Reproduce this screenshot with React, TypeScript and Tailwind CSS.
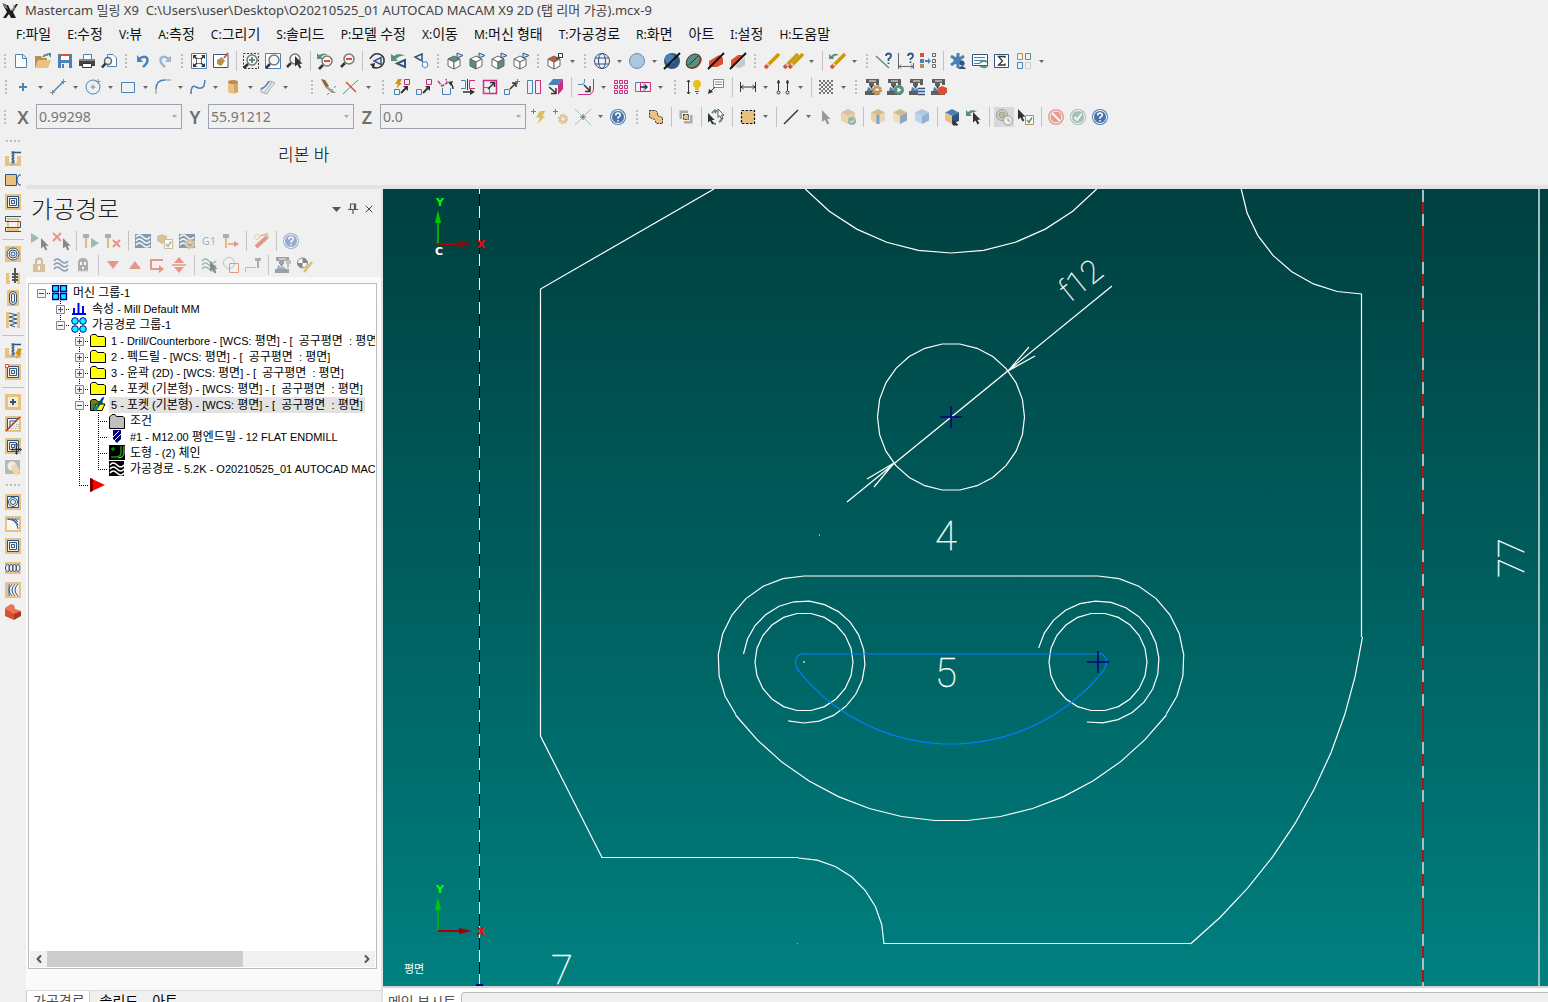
import React from 'react';
import { ChevronLeft, ChevronRight, X } from 'lucide-react';
import clsx from 'clsx';

const BLUE = '#4a82b8';
const NAVY = '#2f5580';
const GREEN = '#5a9080';
const RED = '#dc5032';
const TAN = '#e9c281';
const DARK = '#333333';
const GRAY = '#8a8a8a';
const GOLD = '#cc9a0a';
const PINK = '#cc2a80';

const CURSOR = 'M0 0V10.500L2.500 8.500L4.500 12.500L6.300 11.600L4.400 7.800H7.500Z';

/* small pieces shared by several icons */
const cursor = (x: number, y: number, fill = DARK) => (
	<path d={CURSOR} transform={`translate(${x} ${y})`} fill={fill} />
);

const lens = (x: number, y: number, sign?: string) => (
	<g fill="none">
		<path d={`M${x - 4} ${y + 4}L${x - 8} ${y + 8}`} stroke={DARK} strokeWidth="2.500" />
		<circle cx={x} cy={y} r="5" stroke="#777" strokeWidth="1.500" fill="#f6f6f6" />
		{sign && <path d={sign} stroke={RED} strokeWidth="2" />}
	</g>
);

const cube = (top: string, left: string, right: string, edge = '#666') => (
	<g stroke={edge} strokeLinejoin="round">
		<path d="M1 6L7 3L13 6L7 9Z" fill={top} />
		<path d="M1 6L7 9V16L1 13Z" fill={left} />
		<path d="M13 6L7 9V16L13 13Z" fill={right} />
	</g>
);

const viewCube = (top: string, left: string, right: string) => (
	<g>
		{cube(top, left, right)}
		<path d="M10 0L16 2.500L10 5Z" fill="#cfe0ee" stroke={NAVY} />
	</g>
);

const solidCube = (top: string, left: string, right: string) => (
	<g>
		<path d="M8 0L15 3.500L8 7L1 3.500Z" fill={top} />
		<path d="M1 3.500L8 7V15L1 11.500Z" fill={left} />
		<path d="M15 3.500L8 7V15L15 11.500Z" fill={right} />
	</g>
);

const mill = (extra?: React.ReactNode) => (
	<g>
		<path d="M1 0H14V6H11V4H9V7H4V4H1Z" fill="#5f5f5f" />
		<path d="M4 1H11V3H4Z" fill="#aaa" />
		<path d="M5 7H8L6.500 10Z" fill={DARK} />
		<path d="M2 12L3 8L5 9L6.500 11L8 9L11 12Z" fill={BLUE} />
		<path d="M0 12H14V16H0Z" fill="#5f5f5f" />
		{extra}
	</g>
);

const wave = (color: string) => (
	<path
		d="M1 4Q4 0 8 4T15 4M1 8Q4 4 8 8T15 8M1 12Q4 8 8 12T15 12"
		fill="none"
		stroke={color}
		strokeWidth="1.500"
	/>
);

const pencil = (x = 0) => (
	<g transform={`translate(${x} 0)`}>
		<path d="M2 14L15 1" stroke={GOLD} strokeWidth="3.500" />
		<path d="M1 15L4 12" stroke={RED} strokeWidth="3.500" />
		<path d="M3.500 12.500L5 11" stroke="#ccc" strokeWidth="3.500" />
	</g>
);

const tanBox = (extra: React.ReactNode) => (
	<g>
		<path d="M0 0H16V16H0Z" fill={TAN} />
		{extra}
	</g>
);

const rings = (
	<g fill="none" stroke={NAVY}>
		<path d="M2.500 2.500H13.500V13.500H2.500Z" fill="#f0f0f0" />
		<path d="M4.500 4.500H11.500V11.500H4.500ZM6.500 6.500H9.500V9.500H6.500Z" />
	</g>
);

const help = (
	<g>
		<circle cx="8" cy="8" r="8" fill={BLUE} />
		<circle cx="8" cy="8" r="6.500" fill="#4a72a8" stroke="#fff" strokeWidth="1" />
		<path d="M5.700 6.500Q5.700 4 8 4T10.300 6.200Q10.300 7.300 8 8.500V9.800M8 11V12.500" fill="none" stroke="#fff" strokeWidth="1.500" />
	</g>
);

const bolt = (x: number, y: number) => (
	<path d="M3 0H7L5 4H7L1 10L3 5H0Z" transform={`translate(${x} ${y})`} fill={GOLD} />
);

const gear = (x: number, y: number, fill = '#c49a55') => (
	<g>
		<circle cx={x} cy={y} r="3" fill="none" stroke={fill} strokeWidth="2.500" />
		<circle cx={x} cy={y} r="4.500" fill="none" stroke={fill} strokeWidth="1.500" strokeDasharray="2 1.500" />
	</g>
);

const tool = (x: number) => (
	<g transform={`translate(${x} 0)`}>
		<path d="M0 1H6V5H0Z" fill="#777" />
		<path d="M2 5H4V15H2Z" fill={GOLD} />
	</g>
);

const drill = (
	<g fill="none">
		<path d="M0 6H4V12L8 15L12 12V6H16V16H0Z" fill={TAN} />
		<path d="M8 1V15" stroke="#aaa" strokeWidth="4" />
		<path d="M6 5L10 3M6 8L10 6M6 11L10 9" stroke="#fff" />
		<path d="M8 13V2.500H16" stroke={NAVY} strokeWidth="1.500" />
	</g>
);

const icons: Record<string, React.ReactNode> = {
	new: <path d="M2.500 1.500H10L13.500 5V14.500H2.500ZM9.500 1.500V5.500H13.500" fill="#fff" stroke={BLUE} />,
	open: (
		<g>
			<path d="M0 3H6L7 5H12V15H0Z" fill="#b98f50" />
			<path d="M3 7H16L13 15H0Z" fill={TAN} />
			<path d="M8 4Q10 1 13 2" fill="none" stroke={GREEN} strokeWidth="2" />
			<path d="M12 0L16 0V5Z" fill={GREEN} />
		</g>
	),
	save: (
		<g>
			<path d="M1 1H15V15H1Z" fill={BLUE} />
			<path d="M4 1H12V7H4Z" fill="#fff" />
			<path d="M3 1H13V3H3Z" fill={RED} />
			<path d="M4 10H12V15H4Z" fill="#eee" />
			<path d="M5 11H7V15H5Z" fill={BLUE} />
		</g>
	),
	print: (
		<g>
			<path d="M4.500 1.500H12.500V7H4.500Z" fill="#fff" stroke={BLUE} />
			<path d="M0 6H16V13H0Z" fill="#444" />
			<path d="M0 6H16V8H0Z" fill="#888" />
			<path d="M3.500 10.500H12.500V14.500H3.500Z" fill="#fff" stroke={DARK} />
		</g>
	),
	preview: (
		<g>
			<path d="M6.500 1.500H12L15.500 5V13.500H6.500Z" fill="#fff" stroke={BLUE} />
			<circle cx="7" cy="8" r="3.500" fill="#eee" stroke="#666" strokeWidth="1.500" />
			<path d="M4.500 10.500L1 14.500" stroke={DARK} strokeWidth="2.500" />
		</g>
	),
	undo: (
		<g>
			<path d="M4 6Q9 2 12 5Q14 9 8 14" fill="none" stroke={BLUE} strokeWidth="2.500" />
			<path d="M2 2V9H8Z" fill={BLUE} />
		</g>
	),
	redo: (
		<g opacity="0.500">
			<path d="M12 6Q7 2 4 5Q2 9 8 14" fill="none" stroke={BLUE} strokeWidth="2.500" />
			<path d="M14 2V9H8Z" fill={BLUE} />
		</g>
	),
	fit: (
		<g>
			<path d="M0.500 0.500H15.500V15.500H0.500Z" fill="#fff" stroke={BLUE} />
			<path d="M5.500 5.500H10.500V10.500H5.500Z" fill="none" stroke="#777" />
			<path d="M2 2H6L2 6ZM14 2H10L14 6ZM2 14H6L2 10ZM14 14H10L14 10Z" fill={DARK} />
			<path d="M3 3L6 6M13 3L10 6M3 13L6 10M13 13L10 10" stroke={DARK} strokeWidth="1.500" />
		</g>
	),
	repaint: (
		<g>
			<path d="M0.500 1.500H15V14.500H0.500Z" fill="#fff" stroke={NAVY} />
			<path d="M4 7L9 4L12 8L8 13L4 11Z" fill="#b98f50" />
			<path d="M11 5L15 0" stroke={RED} strokeWidth="2" />
		</g>
	),
	zoomTarget: (
		<g>
			<path d="M0.500 0.500H15.500V15.500H0.500Z" fill="none" stroke={DARK} strokeDasharray="2 1.500" />
			{lens(9, 7)}
			<path d="M9 4V10M6 7H12" stroke={GREEN} strokeWidth="2" />
		</g>
	),
	zoomWindow: (
		<g>
			<path d="M0.500 0.500H15.500V15.500H0.500Z" fill="#fff" stroke={BLUE} />
			{lens(9, 7)}
		</g>
	),
	zoomSelect: (
		<g>
			{lens(8, 6)}
			{cursor(8, 3)}
		</g>
	),
	unzoomPrev: (
		<g>
			{lens(10, 8, 'M7 8H13')}
			<path d="M0 0V6H6L4 4Q7 1 11 2Q7 -1 2 2Z" fill={GREEN} />
		</g>
	),
	unzoom: lens(10, 6, 'M7 6H13'),
	dynRotate: (
		<g fill="none">
			<path d="M1 6Q4 0 10 1Q16 3 15 9Q13 15 7 15L3 14" stroke={DARK} strokeWidth="1.500" />
			<path d="M1 11L6 10L5 16Z" fill={DARK} />
			<path d="M12 4.500L5 8L12 11.500Z" stroke={NAVY} strokeWidth="1.500" />
		</g>
	),
	prevView: (
		<g>
			<path d="M14 7L6 10.500L14 14Z" fill="none" stroke={NAVY} strokeWidth="2" />
			<path d="M0 1V8H7L5 6Q9 2 14 3Q8 -1 3 3Z" fill={GREEN} />
		</g>
	),
	namedView: (
		<g fill="none">
			<path d="M9 1L2 4L9 8Z" stroke={NAVY} strokeWidth="1.500" />
			<path d="M8 7L14 12" stroke={BLUE} />
			<path d="M10 9L14 9L15 13L12 15L9 13Z" fill="#fff" stroke={BLUE} />
		</g>
	),
	viewTop: viewCube(GREEN, '#fff', '#fff'),
	viewFront: viewCube('#fff', GREEN, '#fff'),
	viewRight: viewCube('#fff', '#fff', GREEN),
	viewIso: viewCube('#fff', '#fff', '#fff'),
	cplane: (
		<g>
			{cube(RED, '#fff', '#fff')}
			<path d="M11.500 0.500H15.500V4.500H11.500Z" fill="#fff" stroke={DARK} />
			<path d="M9 6L13 4" stroke={DARK} />
		</g>
	),
	wireframe: (
		<g fill="none" stroke={NAVY}>
			<circle cx="8" cy="8" r="7.500" />
			<ellipse cx="8" cy="8" rx="3.500" ry="7.500" />
			<path d="M1 5H15M1 11H15" />
		</g>
	),
	shaded: <circle cx="8" cy="8" r="7.500" fill="#a9c6e3" stroke="#7288a0" />,
	shadeDark: (
		<g>
			<circle cx="8" cy="8" r="8" fill={NAVY} />
			<circle cx="6" cy="6" r="5" fill={BLUE} />
			<path d="M0 16L16 0" stroke="#111" strokeWidth="2" />
		</g>
	),
	translucent: (
		<g>
			<ellipse cx="9" cy="9" rx="8" ry="5.500" transform="rotate(-45 9 9)" fill={RED} />
			<ellipse cx="7.500" cy="7.500" rx="8" ry="6" transform="rotate(-45 8 8)" fill={GREEN} stroke={DARK} />
			<path d="M3 12L12 3" stroke={DARK} />
		</g>
	),
	material: (
		<g>
			<path d="M1 8L6 5L11 2L15 5V11L9 14L1 14Z" fill={RED} />
			<path d="M0 16L16 0" stroke="#111" strokeWidth="2" />
		</g>
	),
	materialHalf: (
		<g>
			<path d="M1 7L8 2L14 2L1 14Z" fill={RED} />
			<path d="M8 10L15 4V12L10 15L5 14Z" fill="#c8c8c8" />
			<path d="M0 16L16 0" stroke="#111" strokeWidth="2" />
		</g>
	),
	erase: pencil(),
	eraseDup: (
		<g>
			{pencil(-3)}
			{pencil(2)}
		</g>
	),
	undelete: (
		<g>
			{pencil(1)}
			<path d="M0 1V6H5L4 4Q7 2 10 2Q6 -1 2 3Z" fill={GREEN} />
		</g>
	),
	analyze: (
		<g fill="none">
			<path d="M0 3L13 15" stroke={GREEN} strokeWidth="1.500" />
			<path d="M10 3Q10 0.500 12.500 0.500T15 3Q15 4.500 12.500 6V8M12.500 9.500V11" stroke={NAVY} strokeWidth="1.800" />
		</g>
	),
	analyzeDist: (
		<g fill="none">
			<path d="M0.500 0V16M15.500 10V16M1 13.500H15M3 11.500L1 13.500L3 15.500M13 11.500L15 13.500L13 15.500" stroke="#666" />
			<path d="M10 3Q10 0.500 12.500 0.500T15 3Q15 4.500 12.500 6V7M12.500 8.500V10" stroke={NAVY} strokeWidth="1.800" />
		</g>
	),
	levels: (
		<g>
			<path d="M0 0H4V4H0Z" fill={RED} />
			<path d="M0 6H4V10H0Z" fill={BLUE} />
			<path d="M0 11H4V15H0Z" fill="#b98f50" />
			<path d="M5 7H8V5L11 8L8 11V9H5Z" fill={BLUE} />
			<path d="M12.500 0.500H15.500V3.500H12.500ZM12.500 6.500H15.500V9.500H12.500ZM12.500 11.500H15.500V14.500H12.500Z" fill="none" stroke="#666" />
		</g>
	),
	config: (
		<g>
			<path d="M8 0V15M1 3L14 12M14 3L1 12" stroke={BLUE} strokeWidth="3" />
			<circle cx="7.500" cy="7.500" r="4" fill={BLUE} />
			<circle cx="12" cy="10" r="2.500" fill={NAVY} />
			<path d="M8 16Q12 10 16 16Z" fill={NAVY} />
		</g>
	),
	history: (
		<g>
			<path d="M0.500 1.500H15.500V12.500H0.500Z" fill="#fff" stroke={NAVY} />
			<path d="M2 4.500H13M2 7.500H10M2 10.500H8" stroke={BLUE} />
			<path d="M8 10Q11 6 15 9M16 12Q13 16 8 13" fill="none" stroke={GREEN} strokeWidth="2" />
		</g>
	),
	sigma: (
		<g fill="none">
			<path d="M0.500 1.500H14.500V14.500H0.500Z" fill="#fff" stroke={NAVY} />
			<path d="M11 5V3.500H4.500L8.500 8L4.500 12H11V10.500" stroke={DARK} strokeWidth="1.300" />
		</g>
	),
	tiles: (
		<g fill="none">
			<path d="M1.500 0.500H6.500V6.500H1.500Z" stroke="#b98f50" />
			<path d="M9.500 0.500H14.500V6.500H9.500Z" stroke={GREEN} />
			<path d="M1.500 9.500H6.500V15.500H1.500Z" stroke={BLUE} />
			<path d="M9.500 9.500H14.500V15.500H9.500Z" stroke="#ccc" />
		</g>
	),
	point: <path d="M8 4V12M4 8H12" stroke={BLUE} strokeWidth="2" />,
	line: (
		<g fill="none">
			<path d="M3 13L13 3" stroke={BLUE} strokeWidth="1.500" />
			<path d="M2.500 11V16M0 13.500H5M13.500 0V5M11 2.500H16" stroke={GRAY} />
		</g>
	),
	circle: (
		<g fill="none">
			<circle cx="8" cy="8" r="7" stroke={BLUE} />
			<path d="M8 5.500V10.500M5.500 8H10.500M13 0V5M10.500 2.500H15.500" stroke={GRAY} />
		</g>
	),
	rect: <path d="M1.500 3.500H14.500V13.500H1.500Z" fill="none" stroke={BLUE} />,
	fillet: (
		<g fill="none">
			<path d="M1 15V10M10 1H16" stroke={GRAY} />
			<path d="M1 10Q1 1 10 1" stroke={BLUE} strokeWidth="1.500" />
		</g>
	),
	spline: <path d="M1 15Q1 5 6 8T14 7L15 1" fill="none" stroke={BLUE} strokeWidth="1.500" />,
	cylinder: (
		<g>
			<path d="M3 3H13V13Q8 16 3 13Z" fill={TAN} />
			<path d="M9 4H13V13L9 14.500Z" fill="#d2a864" />
			<ellipse cx="8" cy="3" rx="5" ry="2" fill="#b98f50" />
		</g>
	),
	surface: (
		<g fill="#e4e8ec">
			<path d="M1 9Q5 9 10 2L15 4Q10 9 7 15L1 13Z" stroke="#aaa" />
			<path d="M1 10Q5 9 9 2" fill="none" stroke={BLUE} strokeWidth="1.500" />
			<path d="M4 14Q8 10 12 3" fill="none" stroke="#aaa" />
		</g>
	),
	trim: (
		<g>
			<path d="M6 16L16 6" stroke={GREEN} strokeDasharray="3 2" />
			<path d="M0 0L4 1L8 7L5 9Z" fill="#8a6a3a" />
			<path d="M6 7L15 14L11 14L5 9Z" fill="#999" />
		</g>
	),
	breakTwo: (
		<g>
			<path d="M0 15L15 1" stroke={GREEN} />
			<path d="M3 3L13 13" stroke={RED} strokeWidth="1.500" />
		</g>
	),
	xformDynamic: (
		<g fill="none">
			{bolt(1, 0)}
			<path d="M0.500 10.500H5.500V15.500H0.500Z" stroke={BLUE} />
			<path d="M10.500 0.500H15.500V5.500H10.500Z" stroke={PINK} />
			<path d="M7 14L12 9" stroke={DARK} strokeWidth="2" />
			<path d="M9 7H14V12Z" fill={DARK} />
		</g>
	),
	translate: (
		<g fill="none">
			<path d="M0.500 10.500H5.500V15.500H0.500Z" stroke={BLUE} />
			<path d="M10.500 0.500H15.500V5.500H10.500Z" stroke={PINK} />
			<path d="M7 14L12 9" stroke={DARK} strokeWidth="2" />
			<path d="M9 7H14V12Z" fill={DARK} />
		</g>
	),
	rotate: (
		<g fill="none">
			<path d="M4.500 9V15.500H12.500V9" stroke={BLUE} />
			<path d="M0 2L4 7L9 4L8 0" stroke={PINK} strokeWidth="1.500" strokeDasharray="4 1" />
			<path d="M15 10Q15 6 12 4" stroke={DARK} strokeWidth="1.500" />
			<path d="M10 3L15 2L13 7Z" fill={DARK} />
		</g>
	),
	mirror: (
		<g fill="none">
			<path d="M1 1.500H5.500V9.500H1" stroke={BLUE} />
			<path d="M15 1.500H9.500V9.500H15" stroke={PINK} />
			<path d="M7.500 0V11" stroke={DARK} />
			<path d="M3 13H12" stroke={DARK} strokeWidth="1.500" />
			<path d="M10 10L15 13L10 16Z" fill={DARK} />
		</g>
	),
	scale: (
		<g fill="none">
			<path d="M1.500 1.500H14.500V14.500H1.500Z" stroke={PINK} strokeWidth="1.500" />
			<path d="M1.500 8.500H7.500V14.500H1.500Z" stroke={BLUE} />
			<path d="M6 10L12 4M8 3.500H12.500V8" stroke={DARK} strokeWidth="1.500" />
		</g>
	),
	moveOrigin: (
		<g fill="none">
			<path d="M0.500 10.500H5.500V15.500H0.500Z" stroke={BLUE} />
			<path d="M6 10L11 5M8 4H12V8" stroke={DARK} strokeWidth="1.500" />
			<path d="M13.500 0V5M11 2.500H16" stroke={RED} />
		</g>
	),
	offset: (
		<g fill="none">
			<path d="M1.500 1.500H6.500V14.500H1.500Z" stroke={BLUE} />
			<path d="M9.500 1.500H14.500V14.500H9.500Z" stroke={PINK} />
		</g>
	),
	project: (
		<g>
			<path d="M5 0H15L10 6H0Z" fill={BLUE} />
			<path d="M15 0V10L10 16V6Z" fill={PINK} />
			<path d="M1 8L8 14M8 9V14.500H3" stroke={DARK} strokeWidth="1.500" fill="none" />
		</g>
	),
	offsetContour: (
		<g fill="none">
			<path d="M0 5.500H4Q7 5 6.500 0" stroke={BLUE} />
			<path d="M0 15.500H11Q15 15 15.500 10V0" stroke={PINK} />
			<path d="M6 6L12 12M12 7V12.500H7" stroke={DARK} strokeWidth="1.500" />
		</g>
	),
	array: (
		<path
			d="M1.500 1.500H4.500V4.500H1.500ZM6.500 1.500H9.500V4.500H6.500ZM11.500 1.500H14.500V4.500H11.500ZM1.500 6.500H4.500V9.500H1.500ZM6.500 6.500H9.500V9.500H6.500ZM11.500 6.500H14.500V9.500H11.500ZM1.500 11.500H4.500V14.500H1.500ZM6.500 11.500H9.500V14.500H6.500ZM11.500 11.500H14.500V14.500H11.500Z"
			fill="none"
			stroke={PINK}
		/>
	),
	stretch: (
		<g fill="none">
			<path d="M0.500 3.500H9V12.500H0.500Z" stroke={BLUE} />
			<path d="M5.500 3.500H15.500V12.500H5.500Z" stroke={PINK} />
			<path d="M5 8H11" stroke={DARK} strokeWidth="1.500" />
			<path d="M10 5L13 8L10 11Z" fill={DARK} />
		</g>
	),
	smartDim: (
		<g fill="none">
			<path d="M2.500 1V15M1 3L2.500 1L4 3M1 13L2.500 15L4 13" stroke={DARK} />
			<circle cx="11" cy="5" r="4" fill="#e8c21a" />
			<path d="M9 8H13V11H9Z" fill="#e8c21a" />
			<path d="M9 12.500H13M10 14.500H12" stroke="#555" />
		</g>
	),
	note: (
		<g fill="none">
			<path d="M5.500 0.500H15.500V8.500H5.500Z" fill="#fff" stroke="#888" />
			<path d="M7 3H14M7 5.500H14" stroke="#888" />
			<path d="M7 8L1 14" stroke={DARK} />
			<path d="M0 15L1 10L5 13Z" fill={DARK} />
		</g>
	),
	dimHoriz: <path d="M0.500 3V13M15.500 3V13M1 8H15M3.500 6L1 8L3.500 10M12.500 6L15 8L12.500 10" fill="none" stroke={DARK} />,
	dimVert: (
		<g fill="none" stroke={DARK}>
			<path d="M3.500 3V12M12.500 3V12" />
			<path d="M2.500 4L3.500 1L4.500 4ZM11.500 4L12.500 1L13.500 4Z" fill={DARK} />
			<circle cx="3.500" cy="13.500" r="1.500" />
			<circle cx="12.500" cy="13.500" r="1.500" />
		</g>
	),
	hatch: (
		<g stroke="#777" strokeWidth="2" strokeDasharray="2 2">
			<path d="M1 2H15M1 6H15M1 10H15M1 14H15" />
			<path d="M3 4H15M3 8H15M3 12H15" />
		</g>
	),
	millGear: mill(gear(12, 11)),
	millPlay: mill(
		<g>
			<circle cx="12" cy="11" r="5" fill={GREEN} />
			<path d="M10.500 8.500V13.500L14.500 11Z" fill="#fff" />
		</g>
	),
	millList: mill(
		<g>
			<path d="M9 8H16V16H9Z" fill="#f0f0f0" />
			<path d="M9 9.500H16M9 12.500H16M9 15.500H16" stroke={NAVY} strokeWidth="1.500" />
		</g>
	),
	millStock: mill(<path d="M7 9L11 7L16 9V14L11 16L7 14Z" fill={RED} />),
	fastPoint: (
		<g opacity="0.600">
			<path d="M2.500 0V5M0 2.500H5" stroke={DARK} />
			<g transform="translate(5 2) scale(1.300)">{bolt(0, 0)}</g>
		</g>
	),
	gearPoint: (
		<g opacity="0.600">
			<path d="M2.500 0V5M0 2.500H5" stroke={DARK} />
			{gear(10, 10, '#d9a860')}
		</g>
	),
	cross: (
		<g>
			<path d="M0 0L16 16M16 0L0 16" stroke="#9cc0b2" />
			<path d="M8 5V11M5 8H11" stroke="#666" />
		</g>
	),
	help,
	selUnion: (
		<path
			d="M1.500 1.500H7.500L9.500 3.500V6.500L14.500 8.500V14.500H8.500L6.500 10.500L1.500 8.500Z"
			fill={TAN}
			stroke={DARK}
			strokeDasharray="2 1"
		/>
	),
	selInside: (
		<g>
			<path d="M1.500 1.500H10V4H4V10H1.500ZM12 6H14.500V14.500H6V12H12Z" fill="#aaa" />
			<path d="M5.500 5.500H10.500V10.500H5.500Z" fill={TAN} stroke={DARK} strokeDasharray="2 1" />
		</g>
	),
	selSwap: (
		<g>
			<path d="M4 4Q6 1 9 2M14 8Q14 12 11 13M8 15Q5 15 4 13" fill="none" stroke={GREEN} strokeWidth="2" />
			<path d={CURSOR} transform="translate(0 4) scale(.9)" fill={DARK} />
			<path d={CURSOR} transform="translate(10 0) scale(.8)" fill="#fff" stroke={DARK} />
			<path d="M6 0L10 2L7 5Z" fill={GREEN} />
		</g>
	),
	selAll: <path d="M1.500 1.500H14.500V14.500H1.500Z" fill={TAN} stroke="#111" strokeWidth="1.200" strokeDasharray="2.500 1.500" />,
	lineStyle: <path d="M1 15L15 1" stroke={DARK} strokeWidth="1.500" />,
	pick: <path d={CURSOR} transform="translate(4 1) scale(1.150)" fill="#999" />,
	solidCheck: (
		<g opacity="0.600">
			{solidCube('#c9a468', TAN, '#dab577')}
			<circle cx="12" cy="12" r="4" fill={GREEN} />
			<path d="M10 12L11.500 13.500L14 10.500" stroke="#fff" fill="none" />
		</g>
	),
	solidEdge: (
		<g opacity="0.700">
			{solidCube('#c9a468', TAN, '#e6cda0')}
			<path d="M8 6V15" stroke={BLUE} strokeWidth="3" />
		</g>
	),
	solidFace: <g opacity="0.700">{solidCube('#c9a468', '#f0d8a8', '#6b86aa')}</g>,
	solidBody: <g opacity="0.800">{solidCube('#9dbfe0', '#b0cdec', '#7ea0c8')}</g>,
	solidBack: (
		<g>
			{solidCube(BLUE, TAN, NAVY)}
			<path d="M10 14L15 11M9 11V16H14Z" stroke={DARK} fill={DARK} />
		</g>
	),
	selLast: (
		<g>
			{cursor(7, 3)}
			<path d="M0 1V7H6L4 5Q7 2 11 3Q7 -1 2 3Z" fill={GREEN} />
		</g>
	),
	verify: (
		<g>
			<path d="M-2 -2H18V18H-2Z" fill="#d8d8d8" />
			<g opacity="0.600">
				<circle cx="6" cy="6" r="5.500" fill="#d8cf9a" stroke={BLUE} />
				<circle cx="6" cy="6" r="3" fill="#e88a6a" stroke={GREEN} />
				<circle cx="12" cy="11.500" r="4.500" fill="#fff" stroke="#777" />
				<path d="M12 9V12H14.500" fill="none" stroke="#777" />
			</g>
		</g>
	),
	selReport: (
		<g>
			{cursor(0, 0)}
			<path d="M7.500 6.500H15.500V15.500H7.500Z" fill="#fff" stroke="#b98f50" />
			<path d="M9 11L11 13.500L14 8.500" fill="none" stroke={GREEN} strokeWidth="1.500" />
		</g>
	),
	cancel: (
		<g opacity="0.500">
			<circle cx="8" cy="8" r="8" fill={RED} />
			<circle cx="8" cy="8" r="6" fill="none" stroke="#fff" />
			<path d="M4 4L12 12" stroke="#fff" strokeWidth="2" />
		</g>
	),
	ok: (
		<g opacity="0.500">
			<circle cx="8" cy="8" r="8" fill={GREEN} />
			<circle cx="8" cy="8" r="6.500" fill="none" stroke="#fff" />
			<path d="M4.500 8L7 11L11.500 5" stroke="#fff" strokeWidth="2" fill="none" />
		</g>
	),
	drill,
	contour: (
		<g fill="none">
			<path d="M0.500 2.500H11.500V13.500H0.500Z" fill={TAN} stroke={NAVY} />
			<path d="M16 3H14Q10 8 14 13H16" stroke={NAVY} />
		</g>
	),
	pocket: tanBox(rings),
	facing: (
		<g fill="none">
			<path d="M2 2H14V15H2Z" fill={TAN} />
			<path d="M4 4H12V12H4Z" fill="#f0f0f0" />
			<path d="M16 0.500H0.500V5.500H15.500V11.500H0.500V15.500H16" stroke={NAVY} />
		</g>
	),
	spiral: tanBox(
		<g fill="none" stroke={NAVY}>
			<circle cx="8" cy="8" r="6" fill="#f0f0f0" />
			<circle cx="8" cy="8" r="4" />
			<circle cx="8" cy="8" r="2" />
		</g>
	),
	spiralBox: tanBox(
		<g fill="none" stroke={NAVY}>
			<path d="M2.500 2.500H13.500V13.500H2.500Z" fill="#f0f0f0" />
			<circle cx="8" cy="8" r="4.500" />
			<circle cx="8" cy="8" r="2.500" />
		</g>
	),
	thread: (
		<g>
			<path d="M1 5H5L4 7L5 9L4 11L5 13V16H1ZM15 5H12V16H15Z" fill={TAN} />
			<path d="M10 0V15" stroke="#555" strokeWidth="2" />
			<path d="M7 6H13M7 9H13M7 12H13" stroke="#555" strokeWidth="2" />
		</g>
	),
	slot: (
		<g fill="none" stroke={NAVY}>
			<path d="M2 0H14V16H2Z" fill={TAN} stroke="none" />
			<rect x="4.500" y="1.500" width="7" height="13" rx="3.500" fill="#f0f0f0" />
			<rect x="6.500" y="3.500" width="3" height="9" rx="1.500" />
		</g>
	),
	helix: (
		<g fill="none">
			<path d="M1 0H4V16H1ZM12 0H15V16H12Z" fill={TAN} />
			<path d="M4 1L12 3L4 5L12 7L4 9L12 11L5 13L10 15" stroke={NAVY} />
		</g>
	),
	drillFast: (
		<g>
			{drill}
			{bolt(10, 7)}
		</g>
	),
	pocketPoint: (
		<g>
			{tanBox(rings)}
			<path d="M0.500 0.500H3.500V3.500H0.500Z" fill="#fff" stroke={RED} />
		</g>
	),
	startHole: tanBox(
		<g>
			<path d="M3 3H13V13H3Z" fill="#f4ead6" />
			<path d="M8 5V11M5 8H11" stroke={NAVY} strokeWidth="2" />
		</g>
	),
	rest: tanBox(
		<g fill="none" stroke={NAVY}>
			<path d="M2 2H14V14H2Z" fill="#f0f0f0" stroke="none" />
			<path d="M2.500 13V2.500H14M5 11V5H11M7.500 8V7.500H9" />
			<path d="M6 12.500H14M9 10.500H14M11 8.500H14" stroke="#aaa" strokeDasharray="1 1" />
			<path d="M1 15L15 1" stroke="#b03020" strokeWidth="1.500" />
		</g>
	),
	pocketMove: (
		<g>
			{tanBox(rings)}
			<path d="M11.500 6V16M7 11.500H16" stroke={DARK} strokeWidth="1.500" />
			<path d="M10 7L11.500 5L13 7M10 15L11.500 17L13 15M8 10L6 11.500L8 13M15 10L17 11.500L15 13" fill={DARK} />
		</g>
	),
	hand: (
		<g>
			<path d="M0 0H15V14H0Z" fill="#b8b8b8" />
			<circle cx="7" cy="6" r="4.500" fill="#eee" />
			<path d="M6 6L11 4L15 11L13 15L9 15Z" fill="#f2d7a6" />
		</g>
	),
	corner: tanBox(
		<g fill="none" stroke={NAVY}>
			<path d="M2 2H14V14H2Z" fill="#f8f8f8" stroke="none" />
			<path d="M3 3Q12 4 13 13M7 3Q12 5 13 9M10 3L13 6M14 3H2" />
		</g>
	),
	coil: (
		<g fill="none">
			<path d="M0 2H16V14H0Z" fill={TAN} />
			<path d="M0 5H16V11H0Z" fill="#f0f0f0" />
			<g stroke={NAVY}>
				<ellipse cx="2.500" cy="8" rx="2" ry="3.500" />
				<ellipse cx="6" cy="8" rx="2" ry="3.500" />
				<ellipse cx="9.500" cy="8" rx="2" ry="3.500" />
				<ellipse cx="13" cy="8" rx="2" ry="3.500" />
			</g>
		</g>
	),
	parallel: tanBox(
		<g fill="none" stroke={NAVY}>
			<path d="M3 2H14V14H3Z" fill="#f0f0f0" stroke="none" />
			<path d="M7 2Q1 8 7 14M10 2Q4 8 10 14M13 2Q7 8 13 14M4 2V14" />
		</g>
	),
	block: (
		<g>
			<path d="M0 4L6 0L9 1L10 5L16 7L9 11L0 8Z" fill="#e8745a" />
			<path d="M0 5L9 10V16L0 12Z" fill="#d9502e" />
			<path d="M16 7L9 10V16L16 12Z" fill="#a83a20" />
		</g>
	),
	selectAll: (
		<g>
			<path d="M0 0L8 5L0 10Z" fill={GREEN} />
			<g>{cursor(10, 5)}</g>
		</g>
	),
	selectDirty: (
		<g>
			<path d="M0 0L8 8M8 0L0 8" stroke={RED} strokeWidth="2" />
			{cursor(10, 5)}
		</g>
	),
	regenAll: (
		<g>
			{tool(0)}
			<path d="M8 5L16 10L8 15Z" fill={GREEN} />
		</g>
	),
	regenDirty: (
		<g>
			{tool(0)}
			<path d="M8 7L15 14M15 7L8 14" stroke={RED} strokeWidth="2" />
		</g>
	),
	backplot: (
		<g>
			<path d="M0 1H16V15H0Z" fill={NAVY} />
			{wave('#fff')}
		</g>
	),
	verifySel: (
		<g>
			<path d="M0 3L5 1L10 3V8L5 11L0 8Z" fill="#c49a55" />
			<path d="M7.500 6.500H15.500V15.500H7.500Z" fill="#fff" stroke="#b98f50" />
			<path d="M9 11L11 13.500L14 8.500" fill="none" stroke={GREEN} strokeWidth="1.500" />
		</g>
	),
	backplotGear: (
		<g>
			<path d="M0 1H16V15H0Z" fill={NAVY} />
			{wave('#fff')}
			{gear(11, 11)}
		</g>
	),
	g1: (
		<text x="8" y="12" textAnchor="middle" fontSize="11" fill={BLUE}>
			G1
		</text>
	),
	feed: (
		<g>
			{tool(0)}
			<path d="M5 11H12" stroke={RED} strokeWidth="1.500" />
			<path d="M11 8L16 11L11 14Z" fill={RED} />
		</g>
	),
	wand: (
		<g fill="none">
			<path d="M3 14L14 4" stroke={RED} strokeWidth="4" />
			<path d="M7 3L14 1L15 5" stroke="#b98f50" strokeWidth="1.500" />
			<circle cx="4" cy="4" r="2.500" stroke={GOLD} strokeDasharray="2 1" />
		</g>
	),
	lock: (
		<g fill="none">
			<path d="M5 8V4Q5 1.500 8 1.500T11 4V8" stroke="#a08a60" strokeWidth="1.800" />
			<path d="M2 7H14V15H2Z" fill="#c49a55" />
			<path d="M8 9V13" stroke="#fff" strokeWidth="2" />
		</g>
	),
	waves: wave(NAVY),
	ghost: (
		<g>
			<path d="M3 15V6Q3 1 8 1T13 6V15L11 13L9.500 15L8 13L6.500 15L5 13Z" fill="#777" />
			<path d="M5 5H7V8H5ZM9 5H11V8H9ZM7 10H9V12H7Z" fill="#fff" />
		</g>
	),
	down: <path d="M2 4H14L8 12Z" fill={RED} />,
	up: <path d="M2 12H14L8 4Z" fill={RED} />,
	loop: (
		<g fill="none">
			<path d="M13 4V3H2V12H11" stroke={RED} strokeWidth="2" />
			<path d="M10 8L15 12L10 16Z" fill={RED} />
		</g>
	),
	upDown: <path d="M3 6L8 0L13 6ZM3 10L8 16L13 10ZM1 7.300H15V8.700H1Z" fill={RED} />,
	wavePick: (
		<g>
			{wave(GREEN)}
			{cursor(9, 4)}
		</g>
	),
	shapes: (
		<g fill="none">
			<circle cx="6" cy="6" r="5.500" stroke="#999" />
			<path d="M6.500 6.500H15.500V15.500H6.500Z" stroke={RED} />
		</g>
	),
	toolStep: (
		<g fill="none">
			<path d="M0.500 15V10.500H11" stroke="#b98f50" />
			<path d="M10 1H16V4H14V11H12V4H10Z" fill="#777" />
		</g>
	),
	target: (
		<g>
			<circle cx="5.500" cy="6" r="5" fill="#fff" stroke={DARK} />
			<path d="M5.500 6V1A5 5 0 0 1 10.500 6ZM5.500 6V11A5 5 0 0 1 0.500 6Z" fill={DARK} />
			<path d="M7 15L15 5" stroke={GOLD} strokeWidth="2.500" />
		</g>
	),
	millGray: mill(<path d="M11 3H16V7H14V11H12V7H11Z" fill="#999" />),
	pin: <path d="M5.500 3V8.500H10.500V3ZM9.500 3V8M3 8.500H13M8 9V13" fill="none" stroke="#555" strokeWidth="1.200" />,
};

/* ';' ':' '::' grips from narrow to wide, '|' and '||' separators, 'v' drop-down arrow, '_' gap */
const fileBar =
	'; new open save print preview : undo redo : fit repaint | zoomTarget zoomWindow zoomSelect | unzoomPrev unzoom | dynRotate prevView namedView : viewTop viewFront viewRight viewIso : cplane v : wireframe v shaded v shadeDark translucent material materialHalf : erase eraseDup v | undelete v : analyze analyzeDist levels | config history sigma tiles v';
const sketchBar =
	': point v line v circle v rect v fillet v spline v cylinder v surface v _ : trim breakTwo v :: xformDynamic translate rotate mirror scale moveOrigin offset project | offsetContour v array stretch v :: smartDim note || dimHoriz v dimVert v | hatch v : millGear millPlay millList millStock';
const selectBar =
	'fastPoint gearPoint cross v help :: selUnion | selInside | selSwap || selAll v | lineStyle v pick solidCheck | solidEdge solidFace solidBody | solidBack selLast | verify selReport | cancel ok help';
const sideBar =
	': drill contour pocket facing | spiral thread slot helix | drillFast pocketPoint | startHole rest pocketMove hand : spiralBox corner pocket coil parallel block';
const pathBar =
	'selectAll selectDirty | regenAll regenDirty | backplot verifySel backplotGear g1 feed | wand | help';
const pathBar2 =
	'lock waves ghost | down up loop upDown | wavePick shapes toolStep | millGray target';

const gripWidth: Record<string, string> = { ';': 'w-2.5', ':': 'w-3', '::': 'w-4' };

function Icon({ name }: { name: string }) {
	return (
		<svg width="16" height="16" viewBox="0 0 16 16" className="block shrink-0 overflow-visible">
			{icons[name]}
		</svg>
	);
}

function Tools({ items, vertical, dim }: { items: string; vertical?: boolean; dim?: boolean }) {
	return (
		<div className={clsx('flex shrink-0 items-center', vertical && 'flex-col')}>
			{items.split(' ').map((item, index) => {
				if (gripWidth[item]) {
					return (
						<span
							key={index}
							className={clsx(
								'flex shrink-0 items-center justify-center',
								vertical ? 'h-3 w-full' : ['h-5', gripWidth[item]]
							)}
						>
							<span
								className={clsx(
									'border-dotted border-[#bdbdbd]',
									vertical ? 'w-3.5 border-t-2' : 'h-3.5 border-l-2'
								)}
							/>
						</span>
					);
				}
				if (item === '|' || item === '||') {
					return (
						<span
							key={index}
							className={clsx(
								'flex shrink-0 items-center justify-center',
								vertical ? 'h-2 w-full' : 'h-5',
								!vertical && (item === '|' ? 'w-2' : 'w-2.5')
							)}
						>
							<span className={clsx('bg-[#c3c3c3]', vertical ? 'h-px w-[22px]' : 'h-5 w-px')} />
						</span>
					);
				}
				if (item === '_') {
					return <span key={index} className="w-3.5 shrink-0" />;
				}
				if (item === 'v') {
					return (
						<button key={index} aria-label="drop-down" className="flex h-5 w-[13px] shrink-0 items-center justify-center">
							<svg width="5" height="3" viewBox="0 0 5 3">
								<path d="M0 0H5L2.500 3Z" fill="#666" />
							</svg>
						</button>
					);
				}
				return (
					<button
						key={index}
						aria-label={item}
						className={clsx('flex size-[22px] shrink-0 items-center justify-center', dim && 'opacity-55')}
					>
						<Icon name={item} />
					</button>
				);
			})}
		</div>
	);
}

function Coordinate({ axis, value }: { axis: string; value: string }) {
	return (
		<div className="flex shrink-0 items-center">
			<label htmlFor={axis} className="w-[26px] text-center text-lg font-semibold text-[#6e6e6e]">
				{axis}
			</label>
			<div className="flex h-[25px] w-[146px] items-center border border-[#9aa5b1]">
				<input
					id={axis}
					defaultValue={value}
					className="min-w-0 flex-1 bg-transparent pl-0.5 text-sm text-[#777] outline-none"
				/>
				<button aria-label={`${axis} values`} className="flex w-3.5 justify-center">
					<svg width="5" height="3" viewBox="0 0 5 3">
						<path d="M0 0H5L2.500 3Z" fill="#aaa" />
					</svg>
				</button>
			</div>
		</div>
	);
}

/* Hangul is set a little larger than the Latin text beside it */
function Mixed({ text, hangul }: { text: string; hangul: string }) {
	return (
		<>
			{text.split(/([가-힣]+)/).map((part, index) =>
				index % 2 ? (
					<span key={index} className={hangul}>
						{part}
					</span>
				) : (
					part
				)
			)}
		</>
	);
}

const treeIcons: Record<string, React.ReactNode> = {
	machine: (
		<path d="M0.500 0.500H6.500V6.500H0.500ZM8.500 0.500H14.500V6.500H8.500ZM0.500 8.500H6.500V14.500H0.500ZM8.500 8.500H14.500V14.500H8.500Z" fill="#00f0ff" stroke="#000080" strokeWidth="1.300" />
	),
	props: <path d="M1 13H15M3 13V7M7.500 13V2M12 13V5" stroke="#0000ff" strokeWidth="2" />,
	group: (
		<g fill="#00ffff" stroke="#0000a0">
			<circle cx="4" cy="4" r="3.300" />
			<circle cx="12" cy="4" r="3.300" />
			<circle cx="4" cy="12" r="3.300" />
			<circle cx="12" cy="12" r="3.300" />
		</g>
	),
	folder: <path d="M0.500 13.500V3L2 1.500H6L7.500 3.500H14L15.500 5V13.500Z" fill="#ffff00" stroke="#000" />,
	openFolder: (
		<g>
			<path d="M0.500 13.500V4L2 2.500H6L7.500 4.500H12V13.500Z" fill="#808000" stroke="#000" />
			<path d="M6 7H15L12 13.500H3Z" fill="#ffff00" stroke="#000" />
			<path d="M3 7L6 12L13 1" fill="none" stroke="#008080" strokeWidth="2.500" />
			<path d="M8 9L14 0" stroke="#0000a0" />
		</g>
	),
	params: <path d="M0.500 15.500V4L3 1.500H6L7.500 3.500H14L15.500 5V15.500Z" fill="#c0c0c0" stroke="#000" />,
	endmill: (
		<g>
			<path d="M4 1H12V10L8 14L4 10Z" fill="#000080" />
			<path d="M4 8L10 2M5 12L12 5" stroke="#fff" />
		</g>
	),
	geometry: (
		<g fill="none">
			<path d="M0 0H16V15H0Z" fill="#000" />
			<path d="M15 1V9Q14 13 9 13" stroke="#c0c080" />
			<path d="M12 1V8Q12 11 8 12H2" stroke="#00a000" strokeWidth="1.500" />
			<path d="M4 2V6M2 4H6" stroke="#00c000" />
		</g>
	),
	nci: (
		<g>
			<path d="M0 0H15V15H0Z" fill="#000" />
			{wave('#fff')}
		</g>
	),
	insert: (
		<g>
			<path d="M0 1L15 8L0 15Z" fill="#ff0000" />
			<path d="M0 1L3 2V14L0 15Z" fill="#800000" />
		</g>
	),
};

/* guides: one char per column. 'P' plus box, 'M' last minus box, 'N' minus box with line below, 'm' root */
const tree = [
	{ guides: 'm', icon: 'machine', text: '머신 그룹-1' },
	{ guides: ' P', icon: 'props', text: '속성 - Mill Default MM' },
	{ guides: ' M', icon: 'group', text: '가공경로 그룹-1' },
	{ guides: '  P', icon: 'folder', text: '1 - Drill/Counterbore - [WCS: 평면] - [  공구평면  : 평면]' },
	{ guides: '  P', icon: 'folder', text: '2 - 펙드릴 - [WCS: 평면] - [  공구평면  : 평면]' },
	{ guides: '  P', icon: 'folder', text: '3 - 윤곽 (2D) - [WCS: 평면] - [  공구평면  : 평면]' },
	{ guides: '  P', icon: 'folder', text: '4 - 포켓 (기본형) - [WCS: 평면] - [  공구평면  : 평면]' },
	{ guides: '  N', icon: 'openFolder', text: '5 - 포켓 (기본형) - [WCS: 평면] - [  공구평면  : 평면]', selected: true },
	{ guides: '  |T', icon: 'params', text: '조건' },
	{ guides: '  |T', icon: 'endmill', text: '#1 - M12.00 평엔드밀 - 12 FLAT ENDMILL' },
	{ guides: '  |T', icon: 'geometry', text: '도형 - (2) 체인' },
	{ guides: '  |L', icon: 'nci', text: '가공경로 - 5.2K - O20210525_01 AUTOCAD MACAM' },
	{ guides: '  L', icon: 'insert', text: '' },
];

function Guide({ kind }: { kind: string }) {
	const box = 'mMNP'.includes(kind);
	const up = '|TLMNP'.includes(kind);
	const down = '|TNP'.includes(kind);
	return (
		<svg width="19" height="16" viewBox="0 0 19 16" className="block shrink-0">
			<g stroke="#000" strokeDasharray="1 1">
				{up && <path d="M9.500 0V8" />}
				{down && <path d="M9.500 8V16" />}
				{kind !== '|' && kind !== ' ' && <path d="M9 8.500H19" />}
			</g>
			{box && (
				<g>
					<path d="M5.500 4.500H13.500V12.500H5.500Z" fill="#f4f4f4" stroke="#888" />
					<path d={kind === 'P' ? 'M7 8.500H12M9.500 6V11' : 'M7 8.500H12'} stroke="#3a4f9a" />
				</g>
			)}
		</svg>
	);
}

function TreeRow({ guides, icon, text, selected }: (typeof tree)[number]) {
	return (
		<li className="flex h-4 items-center">
			{guides.split('').map((kind, index) => (
				<Guide key={index} kind={kind} />
			))}
			<svg width="16" height="16" viewBox="0 0 16 16" className="mr-[3px] ml-px block shrink-0">
				{treeIcons[icon]}
			</svg>
			<span className={clsx('h-4 px-0.5 text-[11px] leading-4 whitespace-pre', selected && 'bg-[#e2e2e2]')}>
				<Mixed text={text} hangul="text-xs" />
			</span>
		</li>
	);
}

function ToolpathPanel() {
	return (
		<aside className="flex w-[357px] shrink-0 flex-col border-r-2 border-[#e3e3e3]">
			<header className="flex h-10 shrink-0 items-center pr-1.5 pl-[5px]">
				<h2 className="flex-1 text-2xl font-light text-[#222]">가공경로</h2>
				<button aria-label="menu" className="mr-1">
					<svg width="9" height="5" viewBox="0 0 9 5">
						<path d="M0 0H9L4.500 5Z" fill="#555" />
					</svg>
				</button>
				<button aria-label="pin" className="mr-0.5">
					<Icon name="pin" />
				</button>
				<button aria-label="close">
					<X size={12} color="#444" />
				</button>
			</header>
			<div className="flex h-6 shrink-0 items-center pl-0.5">
				<Tools items={pathBar} dim />
			</div>
			<div className="flex h-6 shrink-0 items-center pl-0.5">
				<Tools items={pathBar2} dim />
			</div>
			<div className="flex min-h-0 flex-1 flex-col bg-[#fafafa] pt-1.5 pr-1 pb-[21px] pl-0.5">
				<div className="flex min-h-0 flex-1 flex-col border border-[#bdbdbd] bg-white p-px">
					<ul className="min-h-0 flex-1 overflow-hidden pl-0.5 font-[Liberation_Sans,Noto_Sans_CJK_KR,sans-serif] text-black">
						{tree.map((row, index) => (
							<TreeRow key={index} {...row} />
						))}
					</ul>
					<div className="flex h-4 shrink-0 items-stretch bg-[#f0f0f0]">
						<button aria-label="scroll left" className="flex w-[17px] items-center justify-center">
							<ChevronLeft size={12} strokeWidth={4} color="#555" />
						</button>
						<div className="flex-1">
							<div className="h-full w-[63%] bg-[#cdcdcd]" />
						</div>
						<button aria-label="scroll right" className="flex w-[17px] items-center justify-center">
							<ChevronRight size={12} strokeWidth={4} color="#555" />
						</button>
					</div>
				</div>
			</div>
			<nav className="flex h-3 shrink-0 items-start overflow-hidden border-t border-[#dcdcdc] text-sm leading-5 text-black">
				<button className="border-x border-[#c8c8c8] bg-white pr-1 pl-1.5 text-[#555]">가공경로</button>
				<button className="px-2.5">솔리드</button>
				<button className="px-1">아트</button>
			</nav>
		</aside>
	);
}

/* arcs are drawn the way the display engine does, as short straight chords */
function arc(cx: number, cy: number, r: number, from: number, to: number, steps: number) {
	const points: string[] = [];
	for (let i = 0; i <= steps; i++) {
		const a = ((from + ((to - from) * i) / steps) * Math.PI) / 180;
		points.push(`${(cx + r * Math.cos(a)).toFixed(1)},${(cy - r * Math.sin(a)).toFixed(1)}`);
	}
	return points.join(' ');
}

function Triad({ x, y, origin }: { x: number; y: number; origin?: string }) {
	return (
		<g transform={`translate(${x} ${y})`} fontFamily="DejaVu Sans, sans-serif" fontWeight="700" textAnchor="middle">
			<path d="M0 0V-24" stroke="#00b000" strokeWidth="2" />
			<path d="M-3 -21L0 -34L3 -21Z" fill="#00c800" />
			<path d="M0 0H22" stroke="#b00000" strokeWidth="2" />
			<path d="M21 -3L34 0L21 3Z" fill="#a00000" />
			<text x="2" y="-38" fontSize="11" fill="#00ff00">
				Y
			</text>
			<text x="43" y="4" fontSize="11" fill="#ff0000">
				X
			</text>
			{origin && (
				<text x="1" y="11" fontSize="11" fill="#fff">
					{origin}
				</text>
			)}
		</g>
	);
}

function Drawing() {
	return (
		<svg className="block h-full w-full" role="img" aria-label="Part geometry">
			<g transform="translate(-383 -189)" fill="none" stroke="#fff" strokeWidth="1.200">
				<path d="M479.500 189V986" stroke="#000" strokeWidth="1" />
				<path d="M479.500 182V986" strokeWidth="1" strokeDasharray="12 12" />
				<path d="M476 985H483" stroke="#000080" strokeWidth="2" />
				<path d="M1423 189V1400" stroke="#b01212" strokeWidth="2" />
				<path d="M1423 166V1400" stroke="#a4c2c2" strokeWidth="2" strokeDasharray="12 12 12 12 12 36" />
				<path d="M1539 189V1400" stroke="#a0bebe" strokeWidth="2" />

				{/* part outline */}
				<polyline points="714,189 540.5,289 540.5,736 602,857.5 798,857.5" />
				<polyline points={arc(798, 944, 86, 90, 0, 7)} />
				<path d="M884 943.500H1190" />
				<polyline points={arc(877.5, 567, 490, -50.3, -8.2, 9)} />
				<path d="M1361.500 637V294" />
				<polyline points={arc(1362, 172, 122, 188, 270, 7)} />
				<polyline points={arc(951, 55, 198, 270 - 4.74 * 10, 270 + 4.74 * 10, 10)} />

				{/* bore with diameter dimension */}
				<polyline points={arc(951, 417, 73.5, 0, 360, 26)} />
				<path d="M847 502L1112 286M1029 347L1008 371L1035 356M867 479L894 463L874 487" />

				{/* slot */}
				<path d="M804 576H1098" />
				<polyline points={arc(804, 662, 86, 90, 217.6, 9)} />
				<polyline points={arc(951, 549, 272, 217.6, 322.4, 15)} />
				<polyline points={arc(1098, 662, 86, -37.6, 90, 9)} />
				<polyline points={arc(804, 662, 49, 0, 360, 22)} />
				<polyline points={arc(1098, 662, 49, 0, 360, 22)} />
				<polyline points={arc(804, 662, 61, 172.5, -105, 19)} />
				<polyline points={arc(1098, 662, 61, 166.6, -100.4, 18)} />

				{/* toolpath chain */}
				<g stroke="#0080ff">
					<path d="M804 654H1098" />
					<polyline points={arc(804, 662, 8.5, 90, 217.6, 12)} />
					<polyline points={arc(951, 549, 195, 217.6, 322.4, 40)} />
					<polyline points={arc(1098, 662, 8.5, -37.6, 90, 12)} />
				</g>
				<path d="M951 406V428M940 417H962M1098 651V673M1087 662H1109" stroke="#000080" strokeWidth="1.500" />

				<g stroke="none" fill="#8fb8b4">
					<path d="M819 534H820V536H819ZM803 661H805V663H803ZM797 943H798V944H797Z" />
				</g>

				<g strokeWidth="0.300" fill="#fff" fontFamily="Roboto, Lato, sans-serif" fontWeight="100">
					<text x="946" y="550" fontSize="40" textAnchor="middle">
						4
					</text>
					<text x="946" y="687" fontSize="40" textAnchor="middle">
						5
					</text>
					<text x="562" y="984" fontSize="40" textAnchor="middle">
						7
					</text>
					<text transform="translate(1070 303) rotate(-39)" fontSize="32">
						f12
					</text>
					<text transform="translate(1524 558) rotate(-90)" fontSize="36" textAnchor="middle">
						77
					</text>
				</g>
				<g stroke="none">
					<Triad x={438} y={244} origin="C" />
					<Triad x={438} y={931} />
					<text x="404" y="973" fontSize="11" fill="#fff">
						평면
					</text>
				</g>
			</g>
		</svg>
	);
}

const menus = [
	'F:파일',
	'E:수정',
	'V:뷰',
	'A:측정',
	'C:그리기',
	'S:솔리드',
	'P:모델 수정',
	'X:이동',
	'M:머신 형태',
	'T:가공경로',
	'R:화면',
	'아트',
	'I:설정',
	'H:도움말',
];

export default function App() {
	return (
		<div className="flex h-screen flex-col overflow-hidden bg-[#f0f0f0] font-[Noto_Sans,Noto_Sans_CJK_KR,sans-serif]">
			<header className="flex h-[22px] shrink-0 items-center pl-0.5 text-[13px] whitespace-pre text-[#444]">
				<svg width="16" height="16" viewBox="0 0 16 16" className="mr-[7px] shrink-0">
					<path d="M1 2H6L9 8L14 1H16L11 9L14 15H9L7 11L4 15H1L5 9Z" fill="#1c1c1c" />
					<path d="M0 0L4 1L6 6L3 5Z" fill="#777" />
					<path d="M9 6L12 4L11 8Z" fill="#d8b030" />
					<path d="M12 2V6" stroke="#6a9ad0" strokeWidth="1.500" />
				</svg>
				<h1>Mastercam 밀링 X9  C:\Users\user\Desktop\O20210525_01 AUTOCAD MACAM X9 2D (탭 리머 가공).mcx-9</h1>
			</header>

			<nav className="flex h-6 shrink-0 items-center gap-4 pl-4 text-xs whitespace-nowrap text-[#111]">
				{menus.map((menu) => (
					<button key={menu}>
						<Mixed text={menu} hangul="text-sm" />
					</button>
				))}
			</nav>

			<div className="flex h-[30px] shrink-0 items-center">
				<Tools items={fileBar} />
			</div>
			<div className="flex h-[22px] shrink-0 items-center">
				<Tools items={sketchBar} />
			</div>
			<div className="flex h-[37px] shrink-0 items-center">
				<Tools items=";" />
				<Coordinate axis="X" value="0.99298" />
				<Coordinate axis="Y" value="55.91212" />
				<Coordinate axis="Z" value="0.0" />
				<div className="pl-0.5">
					<Tools items={selectBar} />
				</div>
			</div>

			<div className="flex min-h-0 flex-1">
				<div className="w-[26px] shrink-0">
					<Tools items={sideBar} vertical />
				</div>
				<div className="flex min-w-0 flex-1 flex-col">
					<div className="h-[50px] shrink-0 pt-2 pl-[252px] text-[17px] leading-6 font-light text-black">리본 바</div>
					<div className="h-1 shrink-0 bg-[#e3e3e3]" />
					<div className="flex min-h-0 flex-1">
						<ToolpathPanel />
						<main className="flex min-w-0 flex-1 flex-col">
							<div className="min-h-0 flex-1 overflow-hidden bg-linear-to-b from-[#004040] to-[#008080]">
								<Drawing />
							</div>
							<nav className="flex h-4 shrink-0 items-start overflow-hidden border-t-2 border-[#d4d4d4] bg-white text-sm leading-5">
								<button className="mt-1 w-[78px] text-center whitespace-nowrap text-[#555]">메인 뷰시트</button>
								<div className="mt-1 h-5 flex-1 rounded-tl border-t border-l border-[#bdbdbd] bg-[#f0f0f0]" />
							</nav>
						</main>
					</div>
				</div>
			</div>
		</div>
	);
}
